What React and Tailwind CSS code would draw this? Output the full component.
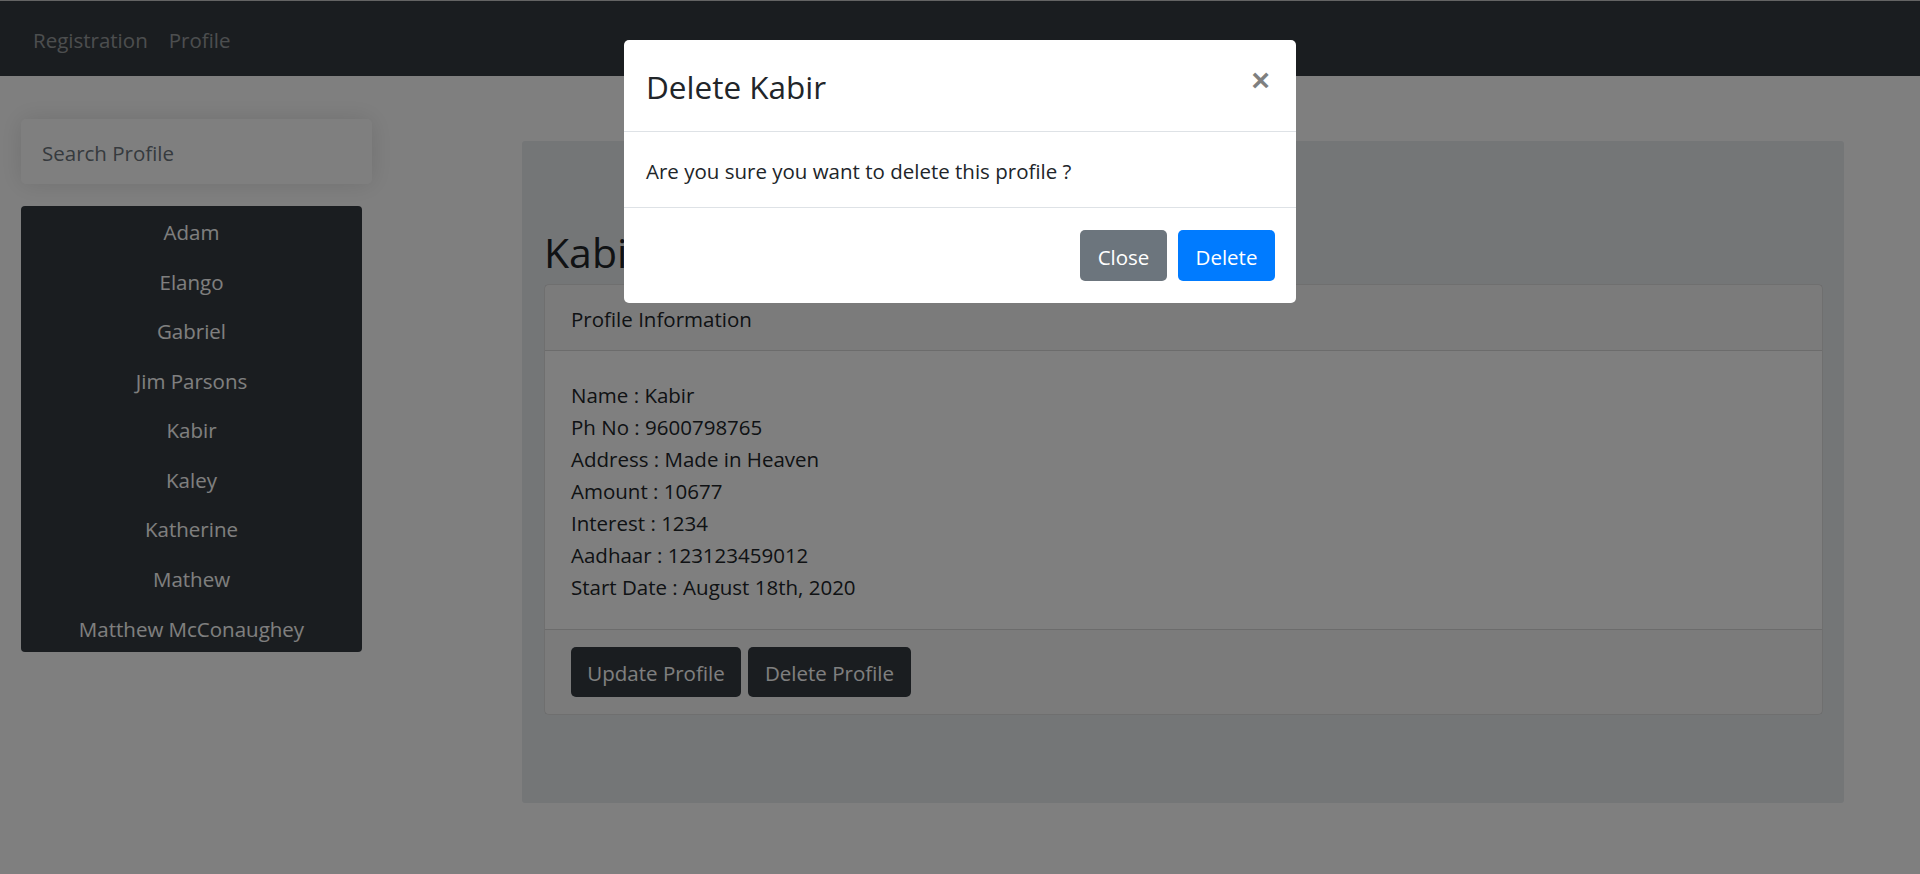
import React from 'react';

const profiles = ['Adam', 'Elango', 'Gabriel', 'Jim Parsons', 'Kabir', 'Kaley', 'Katherine', 'Mathew', 'Matthew McConaughey'];

const details = [
  ['Name', 'Kabir'],
  ['Ph No', '9600798765'],
  ['Address', 'Made in Heaven'],
  ['Amount', '10677'],
  ['Interest', '1234'],
  ['Aadhaar', '123123459012'],
  ['Start Date', 'August 18th, 2020'],
];

const App = () => {
  return (
    <div className="relative min-h-screen bg-white text-[#212529] font-['Open_Sans','Noto_Sans',sans-serif] border-t border-[#c8c8c8]">
      <nav className="h-[75px] bg-[#343a40] flex items-center pl-[33px] pt-[3px] gap-[21px] text-[20.5px] text-white/50">
        <span>Registration</span>
        <span>Profile</span>
      </nav>

      <div className="flex items-start pl-[21px] pt-[43px]">
        <aside className="w-[351px] shrink-0">
          <input
            type="text"
            placeholder="Search Profile"
            className="w-full h-[65px] px-[21px] pt-[3px] rounded-[5px] bg-white text-[20.5px] outline-none shadow-[0_0_24px_rgba(0,0,0,0.12)] placeholder:text-[#6c757d]"
          />
          <ul className="mt-[22px] w-[341px] bg-[#343a40] rounded-[4px] text-white text-[20.5px]">
            {profiles.map(p => (
              <li key={p} className="h-[49.6px] pt-[3px] flex items-center justify-center">{p}</li>
            ))}
          </ul>
        </aside>

        <main className="ml-[150px] mt-[22px] w-[1322px] bg-[#e9ecef] rounded-[3px] pl-[22px] pr-[21px] pt-[87px] pb-[88px]">
          <h1 className="text-[41px] font-medium leading-[48px] mb-[8px]">Kabir</h1>
          <div className="bg-white border border-black/[0.125] rounded-[5px]">
            <div className="h-[66px] pt-[3px] flex items-center px-[26px] bg-black/[0.03] border-b border-black/[0.125] text-[20.5px]">
              Profile Information
            </div>
            <div className="px-[26px] pt-[28px] pb-[26px] text-[20.5px] leading-[32px]">
              {details.map(([k, v]) => (
                <div key={k}>{k} : {v}</div>
              ))}
            </div>
            <div className="flex gap-[7px] px-[26px] py-[17px] bg-black/[0.03] border-t border-black/[0.125]">
              <button className="w-[170px] h-[50px] pt-[3px] rounded-[5px] bg-[#343a40] text-white text-[20.5px]">Update Profile</button>
              <button className="w-[163px] h-[50px] pt-[3px] rounded-[5px] bg-[#343a40] text-white text-[20.5px]">Delete Profile</button>
            </div>
          </div>
        </main>
      </div>

      <div className="fixed inset-0 bg-black/50 flex justify-center items-start pt-[40px]">
        <div className="w-[672px] bg-white rounded-[5px]">
          <div className="h-[92px] flex items-center justify-between border-b border-[#dee2e6] pl-[22px] pr-[26px]">
            <h5 className="text-[31.5px] font-medium pt-[2px]">Delete Kabir</h5>
            <button className="text-[32px] font-bold leading-none text-black/50 font-['Liberation_Sans',sans-serif] -mt-[12px]">×</button>
          </div>
          <div className="h-[76px] pt-[3px] flex items-center px-[22px] border-b border-[#dee2e6] text-[20.5px]">
            Are you sure you want to delete this profile ?
          </div>
          <div className="flex justify-end gap-[11px] px-[21px] py-[22px]">
            <button className="w-[87px] h-[51px] pt-[3px] rounded-[5px] bg-[#6c757d] text-white text-[20.5px]">Close</button>
            <button className="w-[97px] h-[51px] pt-[3px] rounded-[5px] bg-[#007bff] text-white text-[20.5px]">Delete</button>
          </div>
        </div>
      </div>
    </div>
  );
};

export default App;
